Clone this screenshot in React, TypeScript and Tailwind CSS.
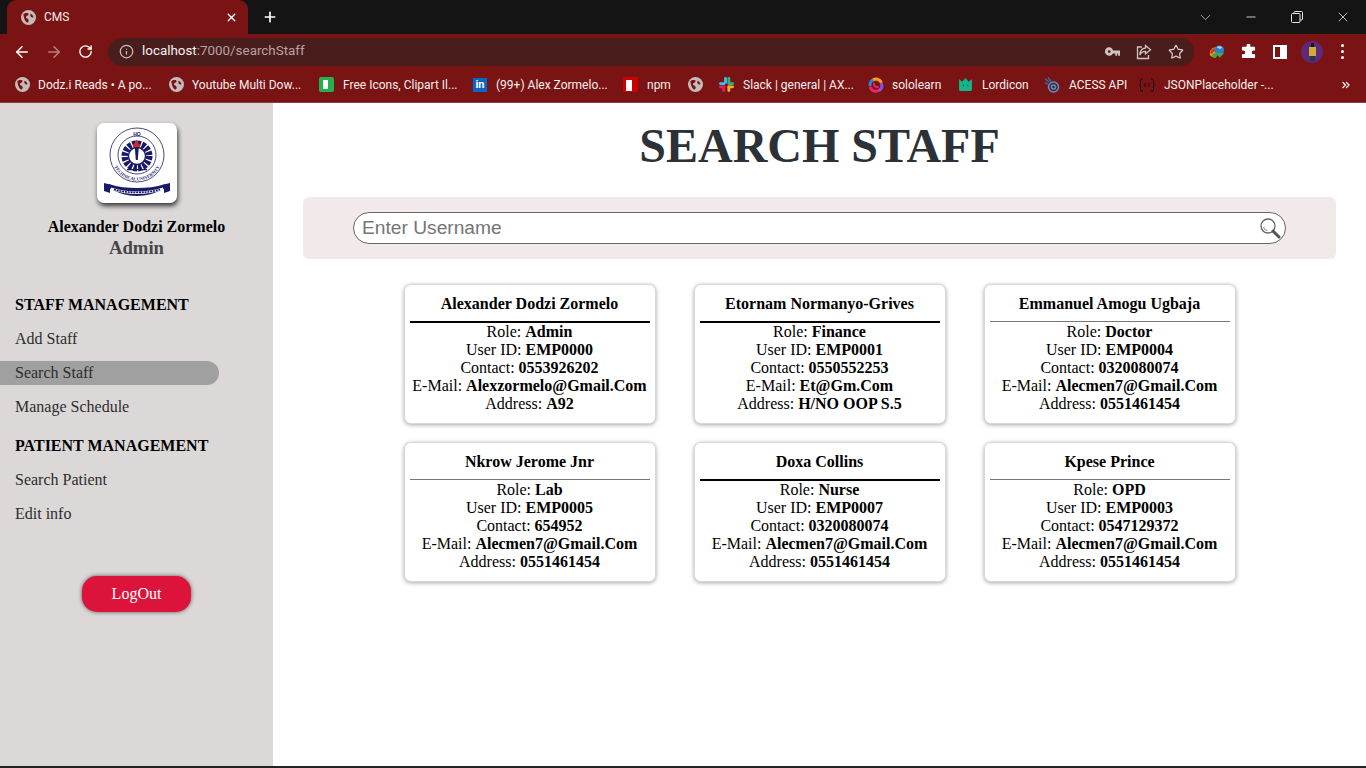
import { ArrowLeft, ArrowRight, ChevronDown, Info, Minus, Plus, RotateCw, Star, X, ChevronsRight } from "lucide-react"

const staff = [
  { name: "Alexander Dodzi Zormelo", role: "Admin", id: "EMP0000", contact: "0553926202", email: "Alexzormelo@Gmail.Com", address: "A92", thick: true },
  { name: "Etornam Normanyo-Grives", role: "Finance", id: "EMP0001", contact: "0550552253", email: "Et@Gm.Com", address: "H/NO OOP S.5", thick: true },
  { name: "Emmanuel Amogu Ugbaja", role: "Doctor", id: "EMP0004", contact: "0320080074", email: "Alecmen7@Gmail.Com", address: "0551461454", thick: false },
  { name: "Nkrow Jerome Jnr", role: "Lab", id: "EMP0005", contact: "654952", email: "Alecmen7@Gmail.Com", address: "0551461454", thick: false },
  { name: "Doxa Collins", role: "Nurse", id: "EMP0007", contact: "0320080074", email: "Alecmen7@Gmail.Com", address: "0551461454", thick: true },
  { name: "Kpese Prince", role: "OPD", id: "EMP0003", contact: "0547129372", email: "Alecmen7@Gmail.Com", address: "0551461454", thick: false },
]

function Globe() {
  return (
    <svg viewBox="0 0 16 16" className="w-[15px] h-[15px]">
      <circle cx="8" cy="8" r="8" fill="#c4bcbc" />
      <path d="M2.500 4.500C4 3 6 2.800 7.800 3.500 8.500 5 7.500 6 6.300 6.300 5 6.700 4.800 7.800 5.800 8.500c1.300.9 2.400 1.200 2.400 2.700 0 1.200-.8 2-1.700 2.300C4.600 12 3.800 10.500 3.400 9 3 7.500 2.500 6 2.500 4.500zM10.300 4c1.500.6 2.700 2 3 3.700-1 .5-2.200.2-2.800-.6-.6-.8-.9-2-.2-3.100z" fill="#7a1414" />
    </svg>
  )
}

function SlackIcon() {
  return (
    <svg viewBox="0 0 16 16" className="w-[15px] h-[15px]">
      <rect x="5.500" y="0" width="3" height="7" rx="1.500" fill="#36c5f0" />
      <rect x="0" y="5.500" width="7" height="3" rx="1.500" fill="#36c5f0" />
      <rect x="9" y="0" width="3" height="7" rx="1.500" fill="#2eb67d" />
      <rect x="9" y="5.500" width="7" height="3" rx="1.500" fill="#2eb67d" />
      <rect x="0" y="9" width="7" height="3" rx="1.500" fill="#e01e5a" />
      <rect x="3.500" y="9" width="3" height="7" rx="1.500" fill="#e01e5a" />
      <rect x="9" y="9" width="7" height="3" rx="1.500" fill="#ecb22e" />
      <rect x="9" y="9" width="3" height="7" rx="1.500" fill="#ecb22e" />
    </svg>
  )
}

function SololearnIcon() {
  return (
    <svg viewBox="0 0 16 16" className="w-[16px] h-[16px]" fill="none" strokeWidth="3" strokeLinecap="round">
      <path d="M5 3a5.500 5.500 0 0 1 8 2" stroke="#f7a11a" />
      <path d="M13.500 7a5.500 5.500 0 0 1-2.500 6.500" stroke="#8a4fe0" />
      <path d="M9 14a5.500 5.500 0 0 1-6.500-3" stroke="#ee2464" />
      <path d="M2 8a5.500 5.500 0 0 1 2-4.500" stroke="#2f7fe0" />
      <path d="M6 7a3 3 0 0 0 4 3" stroke="#ee2464" strokeWidth="2" />
    </svg>
  )
}

function Bookmark({ icon, label, className }: { icon: React.ReactNode; label: string; className: string }) {
  return (
    <div className={`flex items-center shrink-0 ${className}`}>
      <span className="w-4 h-4 flex items-center justify-center shrink-0">{icon}</span>
      <span className="text-[12px] text-[#f4eeee] whitespace-nowrap">{label}</span>
    </div>
  )
}

function BrowserChrome() {
  return (
    <div className="font-['Roboto','Open_Sans',sans-serif]">
      <div className="h-[34px] bg-[#141414] flex items-end pl-[7px] text-white">
        <div className="w-[241px] h-[34px] bg-[#7a1414] rounded-t-[9px] flex items-center pl-[14px] pr-[10px]">
          <Globe />
          <span className="ml-[8px] text-[12px] text-[#f2e8e8] flex-1">CMS</span>
          <X className="w-[13px] h-[13px]" strokeWidth={2.5} />
        </div>
        <div className="h-[34px] flex items-center ml-[14px]">
          <Plus className="w-[16px] h-[16px]" strokeWidth={2.500} />
        </div>
        <div className="flex-1" />
        <div className="h-[34px] flex items-center pr-[15px] text-[#e6e6e6]">
          <ChevronDown className="w-[17px] h-[17px] mr-[30px]" strokeWidth={1} />
          <Minus className="w-[14px] h-[14px] mr-[33px]" strokeWidth={1.500} />
          <svg viewBox="0 0 12 12" className="w-[12px] h-[12px] mr-[32px]" fill="none" stroke="currentColor" strokeWidth="1">
            <rect x="0.500" y="2.500" width="8.500" height="9" rx="1" />
            <path d="M3 2.500V1.500a1 1 0 0 1 1-1h6.500a1 1 0 0 1 1 1V8a1 1 0 0 1-1 1H9" />
          </svg>
          <X className="w-[16px] h-[16px]" strokeWidth={1.200} />
        </div>
      </div>
      <div className="h-[35px] bg-[#7a1414] flex items-center text-white pl-[13px]">
        <ArrowLeft className="w-[18px] h-[18px] mr-[14px]" strokeWidth={2} />
        <ArrowRight className="w-[18px] h-[18px] mr-[15px] text-[#b98080]" strokeWidth={2} />
        <RotateCw className="w-[15px] h-[15px] mr-[15px]" strokeWidth={2.200} />
        <div className="w-[1086px] h-[28px] rounded-full bg-[#4a1d1d] flex items-center pl-[11px] pr-[10px] text-[13.4px]">
          <Info className="w-[15px] h-[15px] text-[#cdbcbc] mr-[8px]" strokeWidth={2} />
          <span className="text-[#f6f0f0]">localhost</span>
          <span className="text-[#b9a1a1]">:7000/searchStaff</span>
          <div className="flex-1" />
          <svg viewBox="0 0 16 10" className="w-[15px] h-[10px] mr-[16px]" fill="#cfc4c4">
            <path d="M4.500 0a4.500 4.500 0 1 0 4 6.500H11V9h2V6.500h1V9h2V3.500H8.500A4.500 4.500 0 0 0 4.500 0zm0 3a1.500 1.500 0 1 1 0 3 1.500 1.500 0 0 1 0-3z" />
          </svg>
          <svg viewBox="0 0 16 16" className="w-[16px] h-[16px] mr-[16px]" fill="none" stroke="#cfc4c4" strokeWidth="1.300">
            <path d="M6 3H1.500v11.500h11V11" />
            <path d="M9.500 1.500l5 4.200-5 4.200V7.300C7 7.300 5 8.500 3.800 11 4 7 6 4.300 9.500 4z" />
          </svg>
          <Star className="w-[16px] h-[16px] text-[#d8cccc]" strokeWidth={1.800} />
        </div>
        <svg viewBox="0 0 18 16" className="w-[17px] h-[16px] ml-[15px] mr-[15px]">
          <path d="M1 11C0 7 3 3.500 7 3l2 7-2 4C4 14 2 13 1 11z" fill="#e8a020" />
          <path d="M1 9c1-3 3-5 6-5l1 3C6 7 4 8 3.500 10z" fill="#d1352b" />
          <path d="M3 12c1-2 3-3 5-3l1 3-3 2z" fill="#3aa655" />
          <circle cx="11" cy="6" r="5" fill="#2a7fd0" />
          <path d="M8 3a5 5 0 0 1 6 0l-2 2z" fill="#a8d4f0" />
          <path d="M7 9l9 0-4.500 5z" fill="#3fae3f" />
        </svg>
        <svg viewBox="0 0 16 16" className="w-[15px] h-[15px] mr-[17px]" fill="#fff">
          <path d="M6 1.500a2 2 0 0 1 4 0V3h4a1 1 0 0 1 1 1v3h-1.500a2 2 0 0 0 0 4H15v3a1 1 0 0 1-1 1H2a1 1 0 0 1-1-1v-3h1.500a2 2 0 0 0 0-4H1V4a1 1 0 0 1 1-1h4z" />
        </svg>
        <div className="w-[14px] h-[14px] border-white border-[2px] border-r-[7px] mr-[14px]" />
        <div className="w-[22px] h-[22px] rounded-full bg-[#5b2a78] flex flex-col items-center justify-center mr-[18px]">
          <div className="w-[3px] h-[4px] bg-[#1a1020]" />
          <div className="w-[7px] h-[9px] bg-[#d4a93a]" />
          <div className="w-[5px] h-[5px] bg-[#2a3550]" />
        </div>
        <div className="flex flex-col gap-[3px]">
          <div className="w-[3px] h-[3px] rounded-full bg-white" />
          <div className="w-[3px] h-[3px] rounded-full bg-white" />
          <div className="w-[3px] h-[3px] rounded-full bg-white" />
        </div>
      </div>
      <div className="h-[34px] bg-[#7a1414] border-b border-[#8c3c3c] flex items-center pl-[14px] pr-[14px] pb-[2px]">
        <Bookmark className="w-[154px] gap-[8px]" icon={<Globe />} label="Dodz.i Reads • A po..." />
        <Bookmark className="w-[150px] gap-[8px]" icon={<Globe />} label="Youtube Multi Dow..." />
        <Bookmark
          className="w-[154px] gap-[9px]"
          icon={
            <span className="w-[15px] h-[15px] rounded-[2px] bg-[#22b14c] flex items-center justify-center">
              <span className="w-[7px] h-[9px] bg-white border-r-2 border-[#22b14c]" />
            </span>
          }
          label="Free Icons, Clipart Il..."
        />
        <Bookmark
          className="w-[151px] gap-[8px]"
          icon={<span className="w-[14px] h-[14px] bg-[#0a66c2] text-white text-[11px] font-bold leading-[14px] text-center">in</span>}
          label="(99+) Alex Zormelo..."
        />
        <div className="w-[65px] shrink-0 flex items-center gap-[9px]">
          <span className="w-[15px] h-[15px] bg-[#cb0000] flex items-center justify-center">
            <span className="w-[9px] h-[11px] bg-white border-r-[3px] border-[#cb0000] mt-[2px]" />
          </span>
          <span className="text-[12px] text-[#f4eeee]">npm</span>
        </div>
        <span className="w-[30px] shrink-0 flex"><Globe /></span>
        <Bookmark className="w-[150px] gap-[9px]" icon={<SlackIcon />} label="Slack | general | AX..." />
        <Bookmark className="w-[89px] gap-[8px]" icon={<SololearnIcon />} label="sololearn" />
        <Bookmark
          className="w-[87px] gap-[9px]"
          icon={
            <svg viewBox="0 0 14 14" className="w-[15px] h-[15px]">
              <path d="M1 2l3 2.500L7 1l3 3.500L13 2v10a1 1 0 0 1-1 1H2a1 1 0 0 1-1-1z" fill="#13b58c" />
              <circle cx="5" cy="8" r="0.700" fill="#0a5a45" />
              <circle cx="9" cy="8" r="0.700" fill="#0a5a45" />
            </svg>
          }
          label="Lordicon"
        />
        <Bookmark
          className="w-[95px] gap-[9px]"
          icon={
            <svg viewBox="0 0 16 16" className="w-[16px] h-[16px]" fill="none" stroke="#3f9bd8" strokeWidth="1.500">
              <circle cx="9.500" cy="10" r="5" />
              <circle cx="9.500" cy="10" r="2" />
              <path d="M1 2l4 3M4 0.500l3 4M1 6l3 1" stroke="#2a6f9e" />
            </svg>
          }
          label="ACESS API"
        />
        <Bookmark
          className="w-[138px] gap-[9px]"
          icon={
            <svg viewBox="0 0 16 14" className="w-[16px] h-[14px]" fill="none" stroke="#1a0a0a" strokeWidth="1">
              <path d="M4 1H2.500Q1.500 1 1.500 2.500v2.500Q1.500 7 .5 7 1.500 7 1.500 9v2.500Q1.500 13 2.500 13H4M12 1h1.500q1 0 1 1.500v2.500q0 2 1 2-1 0-1 2v2.500q0 1.500-1 1.500H12M6 5v4M10 5v4" />
            </svg>
          }
          label="JSONPlaceholder -..."
        />
        <div className="flex-1" />
        <ChevronsRight className="w-[12px] h-[12px] text-[#f4eeee]" strokeWidth={2.500} />
      </div>
    </div>
  )
}

function Logo() {
  return (
    <svg viewBox="0 0 80 80" className="w-[80px] h-[80px]">
      <defs>
        <path id="lowerArc" d="M14.500 32a25.500 25.500 0 0 0 51 0" />
      </defs>
      <circle cx="40" cy="32" r="27" fill="none" stroke="#1b1a66" strokeWidth="0.800" />
      <circle cx="40" cy="32" r="19" fill="none" stroke="#1b1a66" strokeWidth="0.800" />
      <text x="40" y="12.500" textAnchor="middle" fontSize="5" fontWeight="700" fill="#1b1a66" fontFamily="Liberation Sans">HO</text>
      <circle cx="40" cy="33" r="12" fill="none" stroke="#1b1a66" strokeWidth="7" strokeDasharray="3.500 1.200" />
      <circle cx="40" cy="33" r="8.500" fill="#fff" stroke="#1b1a66" strokeWidth="1.300" />
      <path d="M36 24v-3l1 .8 1-2.500 1.500-2.800 1.500 2.800 1 2.500 1-.8v3z" fill="#d8262c" />
      <path d="M37.800 24h4l-1 13h-2z" fill="#1b1a66" />
      <path d="M30 46h20v1.300H30z" fill="#1b1a66" />
      <text fontSize="4.400" fontWeight="700" fill="#1b1a66" fontFamily="Liberation Serif">
        <textPath href="#lowerArc" startOffset="50%" textAnchor="middle">TECHNICAL UNIVERSITY</textPath>
      </text>
      <path d="M7 60l6 1.500V70l-6-2zM73 60l-6 1.500V70l6-2z" fill="#1b1a66" />
      <path d="M12 61c9 3 18 4 28 4s19-1 28-4v4c-9 5-18 8-28 8s-19-3-28-8z" fill="#1b1a66" />
      <path d="M14 64.500c8 2.500 17 4 26 4s18-1.500 26-4v2c-8 3-17 4.500-26 4.500s-18-1.500-26-4.500z" fill="#fff" />
      <path d="M17 66.500c7 2 15 3 23 3s16-1 23-3" fill="none" stroke="#1b1a66" strokeWidth="1.600" strokeDasharray="2 0.800" />
    </svg>
  )
}

function Sidebar() {
  return (
    <aside className="w-[273px] shrink-0 bg-[#dcd8d8] flex flex-col">
      <div className="pt-[20px] flex flex-col items-center">
        <div className="w-[80px] h-[80px] bg-white rounded-[7px] shadow-[1px_3px_5px_rgba(0,0,0,0.75)] overflow-hidden">
          <Logo />
        </div>
        <div className="mt-[15px] text-[16px] leading-[18px] font-bold text-black">Alexander Dodzi Zormelo</div>
        <div className="mt-px text-[18.7px] leading-[22px] font-bold text-[#474747]">Admin</div>
      </div>
      <div className="mt-[36px] pl-[15px] text-[16px] leading-[20px] font-bold text-black">STAFF MANAGEMENT</div>
      <div className="mt-[12px] flex flex-col gap-[10px] text-[16px] leading-[24px] text-[#2d2d2d]">
        <div className="pl-[15px]">Add Staff</div>
        <div className="pl-[15px] w-[219px] bg-[#a0a0a0] rounded-r-full">Search Staff</div>
        <div className="pl-[15px]">Manage Schedule</div>
      </div>
      <div className="mt-[17px] pl-[15px] text-[16px] leading-[20px] font-bold text-black">PATIENT MANAGEMENT</div>
      <div className="mt-[12px] flex flex-col gap-[10px] text-[16px] leading-[24px] text-[#2d2d2d]">
        <div className="pl-[15px]">Search Patient</div>
        <div className="pl-[15px]">Edit info</div>
      </div>
      <button className="mt-[50px] self-start ml-[82px] w-[109px] h-[36px] rounded-[15px] bg-[#dc143c] text-white text-[16px] shadow-[0_0_4px_rgba(0,0,0,0.6)]">LogOut</button>
    </aside>
  )
}

function StaffCard({ s }: { s: (typeof staff)[number] }) {
  return (
    <div className="w-[252px] h-[140px] bg-white rounded-[7px] border border-[#d8d8d8] shadow-[0_1px_4px_rgba(0,0,0,0.35)] px-[5px] text-center text-[16px] leading-[18px] text-black">
      <div className="h-[36px] pt-[2px] flex items-center justify-center font-bold">{s.name}</div>
      <div className={s.thick ? "h-[2px] bg-black" : "h-px bg-[#777]"} />
      <div className={s.thick ? "" : "mt-px"}>
        <div>Role: <b>{s.role}</b></div>
        <div>User ID: <b>{s.id}</b></div>
        <div>Contact: <b>{s.contact}</b></div>
        <div className="whitespace-nowrap">E-Mail: <b>{s.email}</b></div>
        <div>Address: <b>{s.address}</b></div>
      </div>
    </div>
  )
}

export default function App() {
  return (
    <div className="w-[1366px] h-[768px] overflow-hidden flex flex-col bg-white">
      <BrowserChrome />
      <div className="flex-1 flex font-['Liberation_Serif',serif] border-b-2 border-[#222] min-h-0">
        <Sidebar />
        <main className="flex-1 px-[30px]">
          <h1 className="mt-[15px] text-center text-[48px] leading-[55px] font-bold text-[#2c3037]">SEARCH STAFF</h1>
          <div className="mt-[24px] h-[62px] bg-[#f2e9ea] rounded-[6px] flex items-center justify-center">
            <div className="w-[933px] h-[32px] bg-white rounded-full border border-[#666] flex items-center pl-[8px] pr-[4px]">
              <span className="flex-1 font-['Liberation_Sans',sans-serif] text-[19.2px] leading-[28px] pb-[1px] text-[#757575]">Enter Username</span>
              <svg viewBox="0 0 22 22" className="w-[22px] h-[22px]" fill="none">
                <circle cx="9" cy="9" r="7" stroke="#666" strokeWidth="1.300" />
                <path d="M4.500 10a5 5 0 0 0 4 3.500" stroke="#aaa" strokeWidth="1.200" />
                <path d="M14 14l6 6" stroke="#555" strokeWidth="3" strokeLinecap="round" />
              </svg>
            </div>
          </div>
          <div className="mt-[25px] grid grid-cols-[repeat(3,252px)] justify-center gap-x-[38px] gap-y-[18px]">
            {staff.map((s) => (
              <StaffCard key={s.id} s={s} />
            ))}
          </div>
        </main>
      </div>
    </div>
  )
}
